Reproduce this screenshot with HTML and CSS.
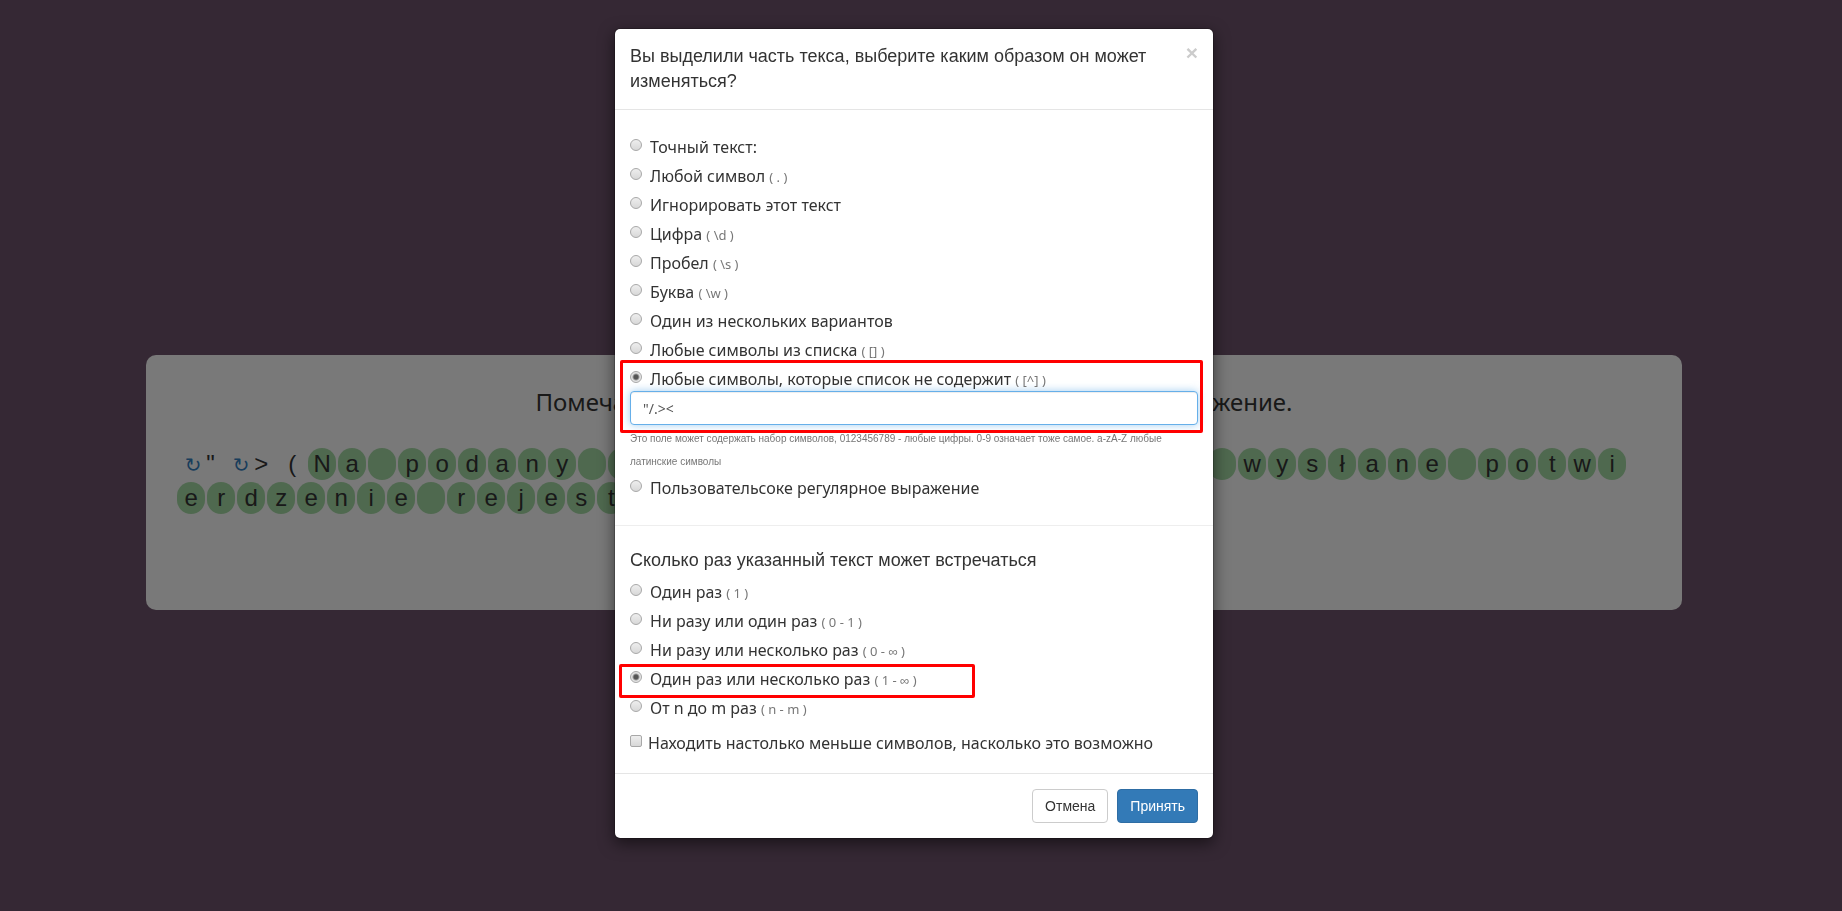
FILE: index.html
```html
<!DOCTYPE html>
<html lang="ru">
<head>
    <meta charset="UTF-8">
    <meta name="viewport" content="width=device-width, initial-scale=1.0">
    <title>Регулярное выражение</title>
    <link rel="stylesheet" href="styles.css">
</head>
<body>
    <main class="page">
        <section class="card">
            <h1 class="card-title">Помечайте все изменяемые части текста, составляя выражение.</h1>
            <div id="chars" class="chars">
                <div class="prefix">
                    <a class="repeat" href="#">↻</a><span class="sign">"</span>
                    <a class="repeat" href="#">↻</a><span class="sign">&gt;</span>
                </div>
                <span class="char">(</span>
            </div>
        </section>
    </main>

    <div class="backdrop"></div>

    <div class="modal">
        <form class="modal-content" role="dialog" aria-labelledby="modal-title">
            <div class="modal-header">
                <h4 id="modal-title" class="modal-title">Вы выделили часть текса, выберите каким образом он может изменяться?</h4>
                <button type="button" class="close" aria-label="Закрыть">×</button>
            </div>
            <div class="modal-body">
                <div class="options">
                    <label class="option"><input type="radio" name="type"><span>Точный текст:</span></label>
                    <label class="option"><input type="radio" name="type"><span>Любой символ <small>( . )</small></span></label>
                    <label class="option"><input type="radio" name="type"><span>Игнорировать этот текст</span></label>
                    <label class="option"><input type="radio" name="type"><span>Цифра <small>( \d )</small></span></label>
                    <label class="option"><input type="radio" name="type"><span>Пробел <small>( \s )</small></span></label>
                    <label class="option"><input type="radio" name="type"><span>Буква <small>( \w )</small></span></label>
                    <label class="option"><input type="radio" name="type"><span>Один из нескольких вариантов</span></label>
                    <label class="option"><input type="radio" name="type"><span>Любые символы из списка <small>( [] )</small></span></label>
                    <div class="marked marked-field">
                        <label class="option"><input type="radio" name="type" checked><span>Любые символы, которые список не содержит <small>( [^] )</small></span></label>
                        <input type="text" class="form-control" aria-label="Символы" aria-describedby="help" value="&quot;/.&gt;&lt;">
                    </div>
                    <p id="help" class="help">Это поле может содержать набор символов, 0123456789 - любые цифры. 0-9 означает тоже самое. a-zA-Z любые латинские символы</p>
                    <label class="option"><input type="radio" name="type"><span>Пользовательсоке регулярное выражение</span></label>
                </div>
                <hr>
                <div class="options">
                    <h4 class="modal-title">Сколько раз указанный текст может встречаться</h4>
                    <label class="option"><input type="radio" name="count"><span>Один раз <small>( 1 )</small></span></label>
                    <label class="option"><input type="radio" name="count"><span>Ни разу или один раз <small>( 0 - 1 )</small></span></label>
                    <label class="option"><input type="radio" name="count"><span>Ни разу или несколько раз <small>( 0 - ∞ )</small></span></label>
                    <div class="marked marked-row">
                        <label class="option"><input type="radio" name="count" checked><span>Один раз или несколько раз <small>( 1 - ∞ )</small></span></label>
                    </div>
                    <label class="option"><input type="radio" name="count"><span>От n до m раз <small>( n - m )</small></span></label>
                    <label class="option lazy"><input type="checkbox"><span>Находить настолько меньше символов, насколько это возможно</span></label>
                </div>
            </div>
            <div class="modal-footer">
                <button type="button" class="btn">Отмена</button>
                <button type="submit" class="btn btn-primary">Принять</button>
            </div>
        </form>
    </div>
    <script src="script.js"></script>
</body>
</html>
```

FILE: styles.css
```css
*,
*::after {
    box-sizing: border-box;
}

body {
    margin: 0;
    min-height: 100vh;
    background-color: #6a5068;
    color: #333;
    font-family: "Liberation Sans", Arial, sans-serif;
    font-size: 14px;
}

.page {
    padding: 355px 14px 0 0;
}

.card {
    width: 84%;
    min-height: 255px;
    margin: 0 auto;
    padding: 30px 31px;
    border-radius: 10px;
    background-color: #f2f2f2;
}

.card-title {
    margin: 0 0 29px;
    font-family: "Comic Sans MS", "Noto Sans", sans-serif;
    font-size: 24px;
    font-weight: 400;
    line-height: 34px;
    text-align: center;
}

.chars {
    display: flex;
    flex-wrap: wrap;
    gap: 2px;
    font-size: 24px;
    line-height: 32px;
}

.prefix {
    display: flex;
    width: 99px;
    height: 32px;
    padding-left: 6px;
}

.repeat {
    flex: none;
    width: 20px;
    color: #337ab7;
    font-family: "DejaVu Sans", sans-serif;
    font-size: 20px;
    line-height: 34px;
    text-align: center;
    text-decoration: none;
}

.sign {
    flex: none;
    width: 28px;
    padding-left: 3px;
}

.char {
    width: 28px;
    height: 32px;
    border-radius: 14px;
    text-align: center;
}

.selected {
    background-color: #9ed29e;
}

.backdrop {
    position: fixed;
    inset: 0;
    background-color: rgba(0, 0, 0, 0.5);
}

.modal {
    position: absolute;
    top: 28px;
    left: 0;
    right: 14px;
}

.modal-content {
    max-width: 600px;
    margin: 0 auto;
    border: 1px solid rgba(0, 0, 0, 0.2);
    border-radius: 6px;
    background-color: #fff;
    background-clip: padding-box;
    box-shadow: 0 5px 15px rgba(0, 0, 0, 0.5);
}

.modal-header {
    display: flex;
    align-items: flex-start;
    gap: 20px;
    padding: 15px;
    border-bottom: 1px solid #e5e5e5;
}

.modal-title {
    flex: 1;
    margin: 0;
    font-size: 18px;
    font-weight: 400;
    line-height: 25px;
}

.close {
    padding: 0;
    border: 0;
    background: none;
    color: #ccc;
    font-family: inherit;
    font-size: 21px;
    font-weight: 700;
    line-height: 18px;
    cursor: pointer;
}

.modal-body {
    padding: 20px 0 18px;
}

.options {
    padding: 0 15px;
}

.option {
    display: flex;
    align-items: flex-start;
    gap: 8px;
    height: 29px;
    font-family: "Comic Sans MS", "Noto Sans", sans-serif;
    font-size: 16px;
    line-height: 34px;
}

.option input {
    appearance: none;
    width: 12px;
    height: 12px;
    margin: 9px 0 0;
    border: 1px solid #a8a8a8;
    border-radius: 50%;
    background: linear-gradient(#eee, #d8d8d8);
}

.option input:checked {
    background: radial-gradient(circle, #555 2px, #e4e4e4 4px) border-box;
}

.option input[type="checkbox"] {
    border-radius: 2px;
}

.option small {
    color: #777;
    font-size: 13px;
}

.lazy {
    gap: 6px;
    margin-top: 6px;
}

/* red frames around the chosen options */
.marked {
    position: relative;
}

.marked::after {
    content: "";
    position: absolute;
    border: 3px solid #f00;
    border-radius: 2px;
    pointer-events: none;
}

.marked-field::after {
    inset: -2px -5px -8px -10px;
}

.marked-row::after {
    top: 2px;
    left: -11px;
    width: 356px;
    height: 34px;
}

.form-control {
    display: block;
    width: 100%;
    height: 34px;
    padding: 6px 12px;
    border: 1px solid #66afe9;
    border-radius: 4px;
    outline: 0;
    box-shadow: inset 0 1px 1px rgba(0, 0, 0, 0.075), 0 0 8px rgba(102, 175, 233, 0.6);
    color: #555;
    font-family: "Comic Sans MS", "Noto Sans", sans-serif;
    font-size: 14px;
}

.help {
    margin: 2px 0 -2px;
    color: #777;
    font-size: 10px;
    line-height: 23px;
}

hr {
    margin: 25px 0 22px;
    border: 0;
    border-top: 1px solid #eee;
}

hr + .options .modal-title {
    margin-bottom: 2px;
}

.modal-footer {
    display: flex;
    justify-content: flex-end;
    gap: 9px;
    padding: 15px;
    border-top: 1px solid #e5e5e5;
}

.btn {
    height: 34px;
    padding: 6px 12px;
    border: 1px solid #ccc;
    border-radius: 4px;
    background-color: #fff;
    color: #333;
    font-family: inherit;
    font-size: 14px;
    cursor: pointer;
}

.btn-primary {
    border-color: #2e6da4;
    background-color: #337ab7;
    color: #fff;
}
```

FILE: script.js
```js
const chars = document.getElementById('chars');
const text = 'Na podany adres e-mail zostało wysłane potwierdzenie rejestracji';

for (const letter of text) {
    const item = document.createElement('span');
    item.className = 'char selected';
    item.textContent = letter;
    chars.appendChild(item);
}
```
